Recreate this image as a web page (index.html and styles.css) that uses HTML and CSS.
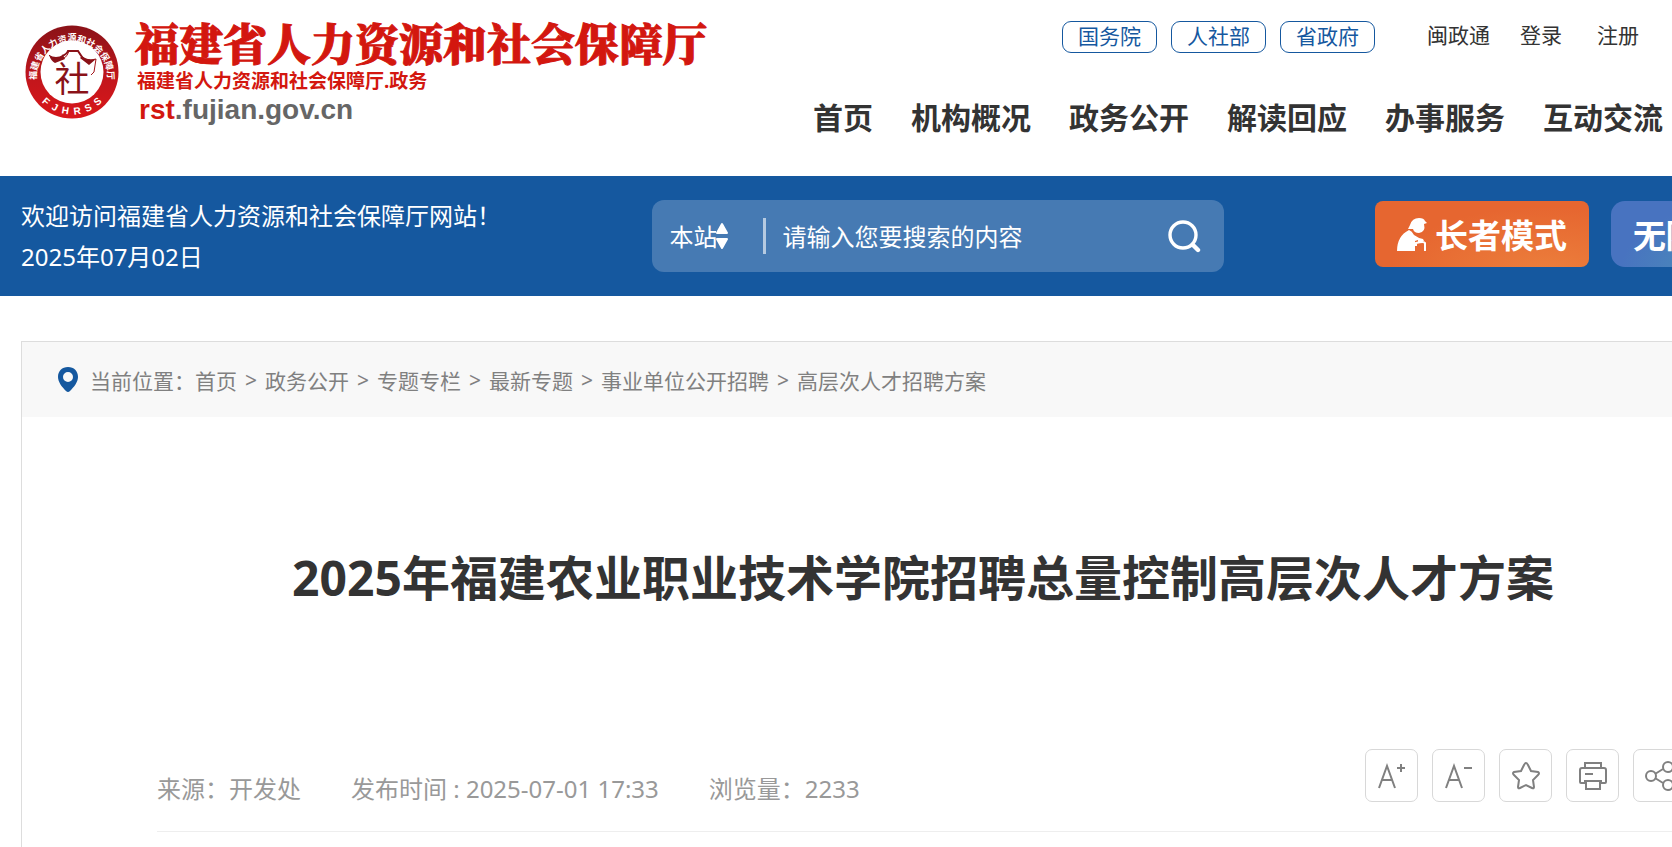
FILE: index.html
```
<!DOCTYPE html>
<html lang="zh-CN">
<head>
  <meta charset="UTF-8">
  <meta name="viewport" content="width=device-width, initial-scale=1.0">
  <title>2025年福建农业职业技术学院招聘总量控制高层次人才方案</title>
  <link rel="stylesheet" href="styles.css">
</head>
<body>

  <!-- Header -->
  <header class="header">
    <a href="#" class="logo">
      <svg class="seal" viewBox="0 0 94 94" role="img" aria-label="FJHRSS">
        <defs>
          <linearGradient id="sealRed" x1="0" y1="0" x2="0" y2="1">
            <stop offset="0" stop-color="#8a1218"/>
            <stop offset="0.6" stop-color="#c4161c"/>
            <stop offset="1" stop-color="#d8161a"/>
          </linearGradient>
          <path id="arcTop" d="M11.5 52 A35.5 35.5 0 1 1 82.5 52"/>
          <path id="arcBottom" d="M10 68 A42.5 42.5 0 0 0 84 68"/>
        </defs>
        <circle cx="47" cy="47" r="46.5" fill="url(#sealRed)"/>
        <circle cx="47" cy="47" r="31.5" fill="#fff"/>
        <text class="seal-cn"><textPath href="#arcTop" startOffset="50%" text-anchor="middle">福建省人力资源和社会保障厅</textPath></text>
        <text class="seal-en"><textPath href="#arcBottom" startOffset="50%" text-anchor="middle">F&#160;&#160;J&#160;&#160;H&#160;&#160;R&#160;&#160;S&#160;&#160;S</textPath></text>
        <path d="M24 30 Q29 36 38 34 Q43 31 44 26 L53 26 Q56 32 60 34 Q66 36 71 34 L69 47 L66 50" fill="none" stroke="#a3151b" stroke-width="1"/>
        <path d="M24 30 Q31 34 38 30 L40 34 L30 38 Q26 36 24 30Z M71 34 Q63 36 57 31 L55 33 L64 40Z" fill="#8a1218"/>
        <path d="M37 31 Q42 29 43 26 L53 26 L57 32" fill="none" stroke="#8a1218" stroke-width="2"/>
        <text class="seal-mark" x="47" y="67" text-anchor="middle">社</text>
      </svg>
      <span class="logo-text">
        <strong class="logo-title">福建省人力资源和社会保障厅</strong>
        <span class="logo-sub">福建省人力资源和社会保障厅.政务</span>
        <span class="logo-url"><em>rst</em>.fujian.gov.cn</span>
      </span>
    </a>

    <div class="header-right">
      <div class="top-links">
        <a href="#" class="pill">国务院</a>
        <a href="#" class="pill">人社部</a>
        <a href="#" class="pill">省政府</a>
        <a href="#" class="top-link first">闽政通</a>
        <a href="#" class="top-link">登录</a>
        <a href="#" class="top-link last">注册</a>
      </div>
      <nav class="nav">
        <a href="#">首页</a>
        <a href="#">机构概况</a>
        <a href="#">政务公开</a>
        <a href="#">解读回应</a>
        <a href="#">办事服务</a>
        <a href="#">互动交流</a>
      </nav>
    </div>
  </header>

  <!-- Search bar -->
  <div class="banner">
    <div class="wrap banner-inner">
      <div class="welcome">
        <p>欢迎访问福建省人力资源和社会保障厅网站！</p>
        <p>2025年07月02日</p>
      </div>
      <form class="search">
        <div class="scope">
          <select aria-label="搜索范围">
            <option>本站</option>
          </select>
          <svg width="12" height="28" viewBox="0 0 12 28" aria-hidden="true">
            <path d="M6 2 L11 11 H1Z M6 26 L11 17 H1Z" fill="#fff" stroke="#fff" stroke-width="2" stroke-linejoin="round"/>
          </svg>
        </div>
        <input type="text" aria-label="搜索内容" placeholder="请输入您要搜索的内容">
        <button type="submit" class="search-btn" aria-label="搜索">
          <svg width="34" height="34" viewBox="0 0 34 34" fill="none" stroke="#fff" stroke-linecap="round">
            <circle cx="16" cy="16" r="13" stroke-width="3.4"/>
            <path d="M26 26 L31 31" stroke-width="4.4"/>
          </svg>
        </button>
      </form>
      <div class="modes">
        <button type="button" class="mode elder">
          <svg width="30" height="34" viewBox="0 0 30 34" fill="#fff" aria-hidden="true">
            <path d="M13 8 Q15 1 22 1 Q27 1 28 4 L30 6 L27 7 Q29 15 22 16 Q17 16 16 12 L11 12Z"/>
            <path d="M12 13 Q15 14 17 18 Q21 21 26 22 L27 24 L21 26 V23 L18 24 V34 H0 Q0 19 12 13Z"/>
            <path d="M19 29 V26 Q27 24 28 26 V34" fill="none" stroke="#fff" stroke-width="2"/>
          </svg>
          长者模式
        </button>
        <button type="button" class="mode access">无障碍模式</button>
      </div>
    </div>
  </div>

  <!-- Article -->
  <main class="wrap article">
    <nav class="crumbs" aria-label="当前位置">
      <svg width="22" height="25" viewBox="0 0 22 25" aria-hidden="true">
        <path d="M11 0 C17 0 21 4 21 10 C21 15 17 20 13 24 Q11 26 9 24 C5 20 1 15 1 10 C1 4 5 0 11 0Z M11 5 A5 5 0 1 0 11 15 A5 5 0 1 0 11 5Z" fill="#15589f" fill-rule="evenodd"/>
      </svg>
      <span>当前位置：</span>
      <a href="#">首页</a><i>&gt;</i>
      <a href="#">政务公开</a><i>&gt;</i>
      <a href="#">专题专栏</a><i>&gt;</i>
      <a href="#">最新专题</a><i>&gt;</i>
      <a href="#">事业单位公开招聘</a><i>&gt;</i>
      <a href="#">高层次人才招聘方案</a>
    </nav>

    <h1>2025年福建农业职业技术学院招聘总量控制高层次人才方案</h1>

    <div class="meta">
      <div class="info">
        <span>来源：开发处</span>
        <span>发布时间 : 2025-07-01 17:33</span>
        <span>浏览量：2233</span>
      </div>
      <div class="tools">
        <button type="button" aria-label="放大字号">
          <svg viewBox="0 0 30 30">
            <path d="M2 27 L10 5 L18 27 M5 19 H15"/>
            <path d="M20 7 H28 M24 3 V11"/>
          </svg>
        </button>
        <button type="button" aria-label="缩小字号">
          <svg viewBox="0 0 30 30">
            <path d="M2 27 L10 5 L18 27 M5 19 H15"/>
            <path d="M20 7 H28"/>
          </svg>
        </button>
        <button type="button" aria-label="收藏">
          <svg viewBox="0 0 30 30">
            <path d="M15 2 Q16 2 17 4 L20 10 L27 11 Q29 12 27 14 L22 19 L23 26 Q23 28 21 27 L15 24 L9 27 Q7 28 7 26 L8 19 L3 14 Q1 12 3 11 L10 10 L13 4 Q14 2 15 2Z"/>
          </svg>
        </button>
        <button type="button" aria-label="打印">
          <svg viewBox="0 0 30 30">
            <path d="M7 7 V2 H23 V7 M8 22 H3 Q2 22 2 21 V9 Q2 7 4 7 H26 Q28 7 28 9 V21 Q28 22 27 22 H22 M6 20 H24 M8 20 V28 H22 V20 M7 13 H15"/>
          </svg>
        </button>
        <button type="button" aria-label="分享">
          <svg viewBox="0 0 30 30">
            <circle cx="6" cy="15" r="5"/>
            <circle cx="23" cy="6" r="5"/>
            <circle cx="23" cy="24" r="5"/>
            <path d="M10 13 L18 8 M10 17 L18 22"/>
          </svg>
        </button>
      </div>
    </div>
  </main>

</body>
</html>
```
FILE: styles.css
```
* {
  box-sizing: border-box;
}

html, body {
  overflow-x: hidden;
}

body {
  margin: 0;
  min-height: 100vh;
  display: flex;
  flex-direction: column;
  font-family: "Noto Sans", "Noto Sans CJK SC", sans-serif;
  color: #333;
  background-color: #fff;
}

a {
  color: inherit;
  text-decoration: none;
}

button, input, select {
  font-family: inherit;
  border: none;
  background: none;
  padding: 0;
}

button {
  cursor: pointer;
}

/* Content runs wider than the window on the right */
.wrap {
  margin-left: 21px;
  margin-right: -153px;
}

/* Header */
.header {
  height: 176px;
  display: flex;
  justify-content: space-between;
  padding-top: 20px;
}

.logo {
  display: flex;
  flex-shrink: 0;
  padding-left: 25px;
}

.seal {
  width: 94px;
  height: 94px;
  margin-top: 5px;
}

.seal-cn {
  font-family: "Noto Sans CJK SC", sans-serif;
  font-size: 9px;
  font-weight: bold;
  fill: #fff;
}

.seal-en {
  font-family: "Liberation Sans", sans-serif;
  font-size: 10px;
  font-weight: bold;
  fill: #fff;
}

.seal-mark {
  font-family: "Noto Sans CJK SC", sans-serif;
  font-size: 35px;
  fill: #8a1218;
}

.logo-text {
  display: flex;
  flex-direction: column;
  padding-left: 16px;
  color: #d3170f;
  white-space: nowrap;
}

.logo-title {
  font-family: "Noto Serif CJK SC", "Noto Sans CJK SC", serif;
  font-size: 44px;
  font-weight: 900;
  line-height: 44px;
  -webkit-text-stroke: 1px #d3170f;
}

.logo-sub {
  padding-left: 2px;
  font-size: 19px;
  font-weight: bold;
  line-height: 34px;
}

.logo-url {
  padding-left: 4px;
  font-family: "Liberation Sans", sans-serif;
  font-size: 28px;
  font-weight: bold;
  line-height: 24px;
  color: #666;
}

.logo-url em {
  font-style: normal;
  color: #d3170f;
}

.header-right {
  padding-right: 9px;
}

.top-links {
  display: flex;
  justify-content: flex-end;
  padding-top: 1px;
  padding-right: 24px;
  font-size: 21px;
  line-height: 29px;
}

.pill {
  width: 95px;
  height: 32px;
  margin-right: 14px;
  border: 1px solid #15589f;
  border-radius: 9px;
  color: #15589f;
  text-align: center;
}

.top-link {
  margin-left: 30px;
}

.top-link.first {
  margin-left: 38px;
}

.top-link.last {
  margin-left: 35px;
}

.nav {
  display: flex;
  justify-content: flex-end;
  gap: 38px;
  margin-top: 44px;
  font-size: 30px;
  font-weight: bold;
  line-height: 42px;
  white-space: nowrap;
}

/* Blue bar */
.banner {
  background-color: #15589f;
  color: #fff;
}

.banner-inner {
  height: 120px;
  display: grid;
  grid-template-columns: 35% 1fr auto;
  align-items: center;
}

.welcome p {
  margin: 0;
  font-size: 24px;
  line-height: 41px;
}

.search {
  display: flex;
  align-items: center;
  height: 72px;
  padding: 0 23px 0 17px;
  border-radius: 12px;
  background-color: #467ab3;
}

.scope {
  display: flex;
  align-items: center;
  width: 97px;
  height: 36px;
  border-right: 3px solid #b5cae1;
}

.scope select {
  appearance: none;
  width: 47px;
  font-size: 24px;
  color: #fff;
}

.search input {
  flex: 1;
  min-width: 0;
  padding-left: 16px;
  font-size: 24px;
  color: #fff;
}

.search input::placeholder {
  color: #fff;
  opacity: 1;
}

.search-btn {
  display: flex;
}

.modes {
  display: flex;
  align-self: start;
  gap: 22px;
  padding-top: 25px;
  padding-left: 151px;
}

.mode {
  display: flex;
  align-items: center;
  width: 214px;
  height: 66px;
  padding-left: 22px;
  font-size: 33px;
  font-weight: bold;
  color: #fff;
  white-space: nowrap;
  overflow: hidden;
}

.elder {
  gap: 8px;
  border-radius: 8px;
  background: radial-gradient(ellipse at 80% 110%, #ec7f3c, #e66630 65%);
}

.access {
  border-radius: 14px;
  background: radial-gradient(ellipse at 50% 110%, #4a8fb8, #4873c0 65%);
}

/* Article */
.article {
  flex: 1;
  margin-top: 45px;
  border: 1px solid #ddd;
  border-bottom: none;
}

.crumbs {
  display: flex;
  align-items: center;
  height: 75px;
  padding-left: 35px;
  background-color: #f8f8f8;
  font-size: 21px;
  color: #808080;
}

.crumbs svg {
  margin-right: 11px;
}

.crumbs i {
  margin: 0 8px;
  font-style: normal;
}

h1 {
  margin: 126px 0 0;
  font-size: 48px;
  line-height: 70px;
  text-align: center;
}

.meta {
  display: flex;
  justify-content: space-between;
  margin: 136px 138px 0 135px;
  padding-bottom: 22px;
  border-bottom: 1px solid #eee;
}

.info {
  display: flex;
  gap: 50px;
  padding-top: 20px;
  font-size: 24px;
  line-height: 40px;
  color: #999;
  white-space: nowrap;
}

.tools {
  display: flex;
  gap: 14px;
}

.tools button {
  display: flex;
  align-items: center;
  justify-content: center;
  width: 53px;
  height: 53px;
  border: 1px solid #d8d8d8;
  border-radius: 7px;
}

.tools svg {
  width: 30px;
  height: 30px;
  fill: none;
  stroke: #808080;
  stroke-width: 2;
}
```
